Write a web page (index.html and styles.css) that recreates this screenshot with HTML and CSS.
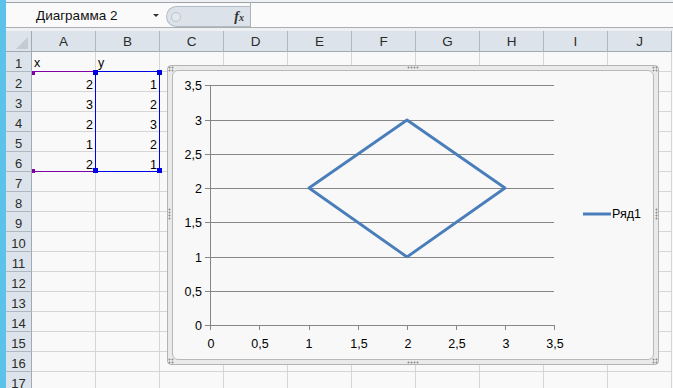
FILE: index.html
```html
<!DOCTYPE html>
<html lang="ru">

<head>
    <meta charset="UTF-8">
    <title>Диаграмма 2</title>
    <link rel="stylesheet" href="styles.css">
</head>

<body>
    <div class="app">
        <div class="ribbon-edge"></div>
        <div class="fxbar">
            <div class="namebox"><span>Диаграмма 2</span><span class="arrow"></span></div>
            <div class="fxpill"><span class="grip"></span><span class="fx">f<i>x</i></span></div>
            <div class="fxinput"></div>
        </div>
        <div class="gap"></div>

        <div class="sheet">
            <div class="row colhead">
                <div class="corner"></div>
                <div class="ch">A</div><div class="ch">B</div><div class="ch">C</div><div class="ch">D</div><div class="ch">E</div>
                <div class="ch">F</div><div class="ch">G</div><div class="ch">H</div><div class="ch">I</div><div class="ch">J</div>
            </div>
            <div class="row">
                <div class="rh">1</div>
                <div class="c txt">x</div><div class="c txt">y</div><div class="c"></div><div class="c"></div><div class="c"></div>
                <div class="c"></div><div class="c"></div><div class="c"></div><div class="c"></div><div class="c"></div>
            </div>
            <div class="row">
                <div class="rh">2</div>
                <div class="c num">2</div><div class="c num">1</div><div class="c"></div><div class="c"></div><div class="c"></div>
                <div class="c"></div><div class="c"></div><div class="c"></div><div class="c"></div><div class="c"></div>
            </div>
            <div class="row">
                <div class="rh">3</div>
                <div class="c num">3</div><div class="c num">2</div><div class="c"></div><div class="c"></div><div class="c"></div>
                <div class="c"></div><div class="c"></div><div class="c"></div><div class="c"></div><div class="c"></div>
            </div>
            <div class="row">
                <div class="rh">4</div>
                <div class="c num">2</div><div class="c num">3</div><div class="c"></div><div class="c"></div><div class="c"></div>
                <div class="c"></div><div class="c"></div><div class="c"></div><div class="c"></div><div class="c"></div>
            </div>
            <div class="row">
                <div class="rh">5</div>
                <div class="c num">1</div><div class="c num">2</div><div class="c"></div><div class="c"></div><div class="c"></div>
                <div class="c"></div><div class="c"></div><div class="c"></div><div class="c"></div><div class="c"></div>
            </div>
            <div class="row">
                <div class="rh">6</div>
                <div class="c num">2</div><div class="c num">1</div><div class="c"></div><div class="c"></div><div class="c"></div>
                <div class="c"></div><div class="c"></div><div class="c"></div><div class="c"></div><div class="c"></div>
            </div>
            <div class="row">
                <div class="rh">7</div>
                <div class="c"></div><div class="c"></div><div class="c"></div><div class="c"></div><div class="c"></div>
                <div class="c"></div><div class="c"></div><div class="c"></div><div class="c"></div><div class="c"></div>
            </div>
            <div class="row">
                <div class="rh">8</div>
                <div class="c"></div><div class="c"></div><div class="c"></div><div class="c"></div><div class="c"></div>
                <div class="c"></div><div class="c"></div><div class="c"></div><div class="c"></div><div class="c"></div>
            </div>
            <div class="row">
                <div class="rh">9</div>
                <div class="c"></div><div class="c"></div><div class="c"></div><div class="c"></div><div class="c"></div>
                <div class="c"></div><div class="c"></div><div class="c"></div><div class="c"></div><div class="c"></div>
            </div>
            <div class="row">
                <div class="rh">10</div>
                <div class="c"></div><div class="c"></div><div class="c"></div><div class="c"></div><div class="c"></div>
                <div class="c"></div><div class="c"></div><div class="c"></div><div class="c"></div><div class="c"></div>
            </div>
            <div class="row">
                <div class="rh">11</div>
                <div class="c"></div><div class="c"></div><div class="c"></div><div class="c"></div><div class="c"></div>
                <div class="c"></div><div class="c"></div><div class="c"></div><div class="c"></div><div class="c"></div>
            </div>
            <div class="row">
                <div class="rh">12</div>
                <div class="c"></div><div class="c"></div><div class="c"></div><div class="c"></div><div class="c"></div>
                <div class="c"></div><div class="c"></div><div class="c"></div><div class="c"></div><div class="c"></div>
            </div>
            <div class="row">
                <div class="rh">13</div>
                <div class="c"></div><div class="c"></div><div class="c"></div><div class="c"></div><div class="c"></div>
                <div class="c"></div><div class="c"></div><div class="c"></div><div class="c"></div><div class="c"></div>
            </div>
            <div class="row">
                <div class="rh">14</div>
                <div class="c"></div><div class="c"></div><div class="c"></div><div class="c"></div><div class="c"></div>
                <div class="c"></div><div class="c"></div><div class="c"></div><div class="c"></div><div class="c"></div>
            </div>
            <div class="row">
                <div class="rh">15</div>
                <div class="c"></div><div class="c"></div><div class="c"></div><div class="c"></div><div class="c"></div>
                <div class="c"></div><div class="c"></div><div class="c"></div><div class="c"></div><div class="c"></div>
            </div>
            <div class="row">
                <div class="rh">16</div>
                <div class="c"></div><div class="c"></div><div class="c"></div><div class="c"></div><div class="c"></div>
                <div class="c"></div><div class="c"></div><div class="c"></div><div class="c"></div><div class="c"></div>
            </div>
            <div class="row">
                <div class="rh">17</div>
                <div class="c"></div><div class="c"></div><div class="c"></div><div class="c"></div><div class="c"></div>
                <div class="c"></div><div class="c"></div><div class="c"></div><div class="c"></div><div class="c"></div>
            </div>

            <!-- выделенные диапазоны данных -->
            <div class="sel-x"><span class="pq top"></span><span class="pq bot"></span></div>
            <div class="sel-y">
                <span class="sq tl"></span><span class="sq tr"></span>
                <span class="sq bl"></span><span class="sq br"></span>
            </div>

            <div class="chart">
                <span class="hdl corner-tl"></span><span class="hdl corner-tr"></span>
                <span class="hdl corner-bl"></span><span class="hdl corner-br"></span>
                <span class="hdl mid-top"></span><span class="hdl mid-bot"></span>
                <span class="hdl mid-left"></span><span class="hdl mid-right"></span>
                <div class="plotbox">
                    <svg width="480" height="288" viewBox="173 71 480 288">
                        <g stroke="#868686" stroke-width="1">
                            <line x1="210" y1="85.5" x2="554" y2="85.5" />
                            <line x1="210" y1="120.5" x2="554" y2="120.5" />
                            <line x1="210" y1="154.5" x2="554" y2="154.5" />
                            <line x1="210" y1="188.5" x2="554" y2="188.5" />
                            <line x1="210" y1="222.5" x2="554" y2="222.5" />
                            <line x1="210" y1="257.5" x2="554" y2="257.5" />
                            <line x1="210" y1="291.5" x2="554" y2="291.5" />
                            <line x1="205" y1="325.5" x2="555" y2="325.5" />
                            <line x1="210.5" y1="85" x2="210.5" y2="330" />
                            <line x1="205" y1="85.5" x2="210" y2="85.5" />
                            <line x1="205" y1="120.5" x2="210" y2="120.5" />
                            <line x1="205" y1="154.5" x2="210" y2="154.5" />
                            <line x1="205" y1="188.5" x2="210" y2="188.5" />
                            <line x1="205" y1="222.5" x2="210" y2="222.5" />
                            <line x1="205" y1="257.5" x2="210" y2="257.5" />
                            <line x1="205" y1="291.5" x2="210" y2="291.5" />
                            <line x1="259.5" y1="325" x2="259.5" y2="330" />
                            <line x1="309.5" y1="325" x2="309.5" y2="330" />
                            <line x1="358.5" y1="325" x2="358.5" y2="330" />
                            <line x1="407.5" y1="325" x2="407.5" y2="330" />
                            <line x1="456.5" y1="325" x2="456.5" y2="330" />
                            <line x1="505.5" y1="325" x2="505.5" y2="330" />
                            <line x1="554.5" y1="325" x2="554.5" y2="330" />
                        </g>
                        <g class="lbl" text-anchor="end">
                            <text x="202" y="90">3,5</text>
                            <text x="202" y="125">3</text>
                            <text x="202" y="159">2,5</text>
                            <text x="202" y="193">2</text>
                            <text x="202" y="227">1,5</text>
                            <text x="202" y="262">1</text>
                            <text x="202" y="296">0,5</text>
                            <text x="202" y="330">0</text>
                        </g>
                        <g class="lbl" text-anchor="middle">
                            <text x="211" y="348">0</text>
                            <text x="260" y="348">0,5</text>
                            <text x="309" y="348">1</text>
                            <text x="359" y="348">1,5</text>
                            <text x="408" y="348">2</text>
                            <text x="457" y="348">2,5</text>
                            <text x="506" y="348">3</text>
                            <text x="555" y="348">3,5</text>
                        </g>
                        <polyline points="407,257 505,188 407,120 309,188 407,257" fill="none" stroke="#4a7ebb" stroke-width="2.8" stroke-linejoin="round" />
                        <line x1="583" y1="214" x2="611" y2="214" stroke="#4a7ebb" stroke-width="2.8" />
                        <text class="lbl" x="612" y="218">Ряд1</text>
                    </svg>
                </div>
            </div>
        </div>
    </div>
</body>

</html>
```

FILE: styles.css
```css
* {
    margin: 0;
    padding: 0;
    box-sizing: border-box;
}

body {
    background: #f9f9f9;
    font-family: "Liberation Sans", Arial, sans-serif;
    color: #000;
    overflow: hidden;
}

.app {
    position: relative;
    width: 673px;
    height: 388px;
    border-left: 6px solid #5dc2ea;
    overflow: hidden;
}

/* полоса ленты и строка формул */
.ribbon-edge {
    height: 3px;
    background: #eef0f3;
    border-bottom: 1px solid #9ea4aa;
}

.fxbar {
    display: flex;
    height: 25px;
    background: #fafafa;
    border-bottom: 1px solid #a9aeb3;
}

.namebox {
    width: 160px;
    display: flex;
    align-items: center;
    padding-left: 30px;
    font-size: 13.5px;
    color: #111;
}

.namebox .arrow {
    margin-left: auto;
    margin-right: 7px;
    border-left: 3px solid transparent;
    border-right: 3px solid transparent;
    border-top: 3px solid #333;
}

.fxpill {
    width: 84px;
    height: 21px;
    margin-top: 3px;
    display: flex;
    align-items: center;
    background: #dbe2ea;
    border: 1px solid #b3bbc4;
    border-right: none;
    border-radius: 11px 0 0 11px;
    padding: 0 6px 0 4px;
}

.grip {
    width: 10px;
    height: 10px;
    border-radius: 50%;
    background: #e3e8ed;
    border: 1px solid #bcc3cb;
}

.fx {
    margin-left: auto;
    font-family: "Liberation Serif", serif;
    font-style: italic;
    font-weight: bold;
    font-size: 14px;
    color: #333;
}

.fx i {
    font-size: 10px;
}

.fxinput {
    flex: 1;
    background: #fbfbfb;
    border-left: 1px solid #aab2ba;
}

.gap {
    height: 3px;
    background: #eef0f2;
}

/* сетка листа */
.sheet {
    position: relative;
}

.row {
    display: flex;
    height: 20px;
}

.colhead {
    height: 21px;
}

.corner,
.rh,
.ch {
    flex: none;
    background: #dce3ea;
    color: #2b2b2b;
    text-align: center;
}

.corner {
    position: relative;
    width: 26px;
    border-right: 1px solid #9eaab6;
    border-bottom: 1px solid #9eaab6;
}

.corner::after {
    content: "";
    position: absolute;
    right: 3px;
    bottom: 2px;
    border-left: 12px solid transparent;
    border-bottom: 12px solid #c3cbd3;
}

.ch {
    width: 64px;
    border-right: 1px solid #aeb8c2;
    border-bottom: 1px solid #9eaab6;
    font-size: 13.5px;
    line-height: 13px;
    padding-top: 4px;
}

.rh {
    width: 26px;
    border-right: 1px solid #9eaab6;
    border-bottom: 1px solid #aeb8c2;
    font-size: 13px;
    line-height: 12px;
    padding-top: 6px;
}

.c {
    flex: none;
    width: 64px;
    border-right: 1px solid #d6d6d6;
    border-bottom: 1px solid #d6d6d6;
    font-size: 12.5px;
    line-height: 12px;
    padding: 7px 2px 0;
}

.c.txt {
    padding-top: 5px;
}

.num {
    text-align: right;
}

/* рамки выделения */
.sel-x {
    position: absolute;
    left: 26px;
    top: 40px;
    width: 63px;
    height: 101px;
    border-top: 1px solid #8000a8;
    border-bottom: 1px solid #8000a8;
}

.pq {
    position: absolute;
    left: 0;
    width: 3px;
    height: 4px;
    background: #8000a8;
}

.pq.top {
    top: -1px;
}

.pq.bot {
    bottom: -2px;
}

.sel-y {
    position: absolute;
    left: 89px;
    top: 40px;
    width: 65px;
    height: 101px;
    border: 1px solid #0000e6;
}

.sq {
    position: absolute;
    width: 5px;
    height: 5px;
    background: #0000e6;
}

.sq.tl { left: -3px; top: -2px; }
.sq.tr { right: -3px; top: -2px; }
.sq.bl { left: -3px; bottom: -2px; }
.sq.br { right: -3px; bottom: -2px; }

/* диаграмма */
.chart {
    position: absolute;
    left: 161px;
    top: 34px;
    width: 492px;
    height: 300px;
    padding: 4px;
    background: #eaeaea;
    border: 1px solid #b4b4b4;
    border-radius: 4px;
}

.plotbox {
    height: 100%;
    background: #f8f8f8;
    border: 1px solid #b9b9b9;
    border-radius: 6px;
    overflow: hidden;
}

.plotbox svg {
    display: block;
}

.lbl {
    font-family: "Liberation Sans", Arial, sans-serif;
    font-size: 12.5px;
    fill: #000;
}

.hdl {
    position: absolute;
    background-image: radial-gradient(circle, #8f8f8f 0.8px, transparent 1.2px);
    background-size: 3px 3px;
}

.corner-tl { left: 0; top: 0; width: 6px; height: 6px; }
.corner-tr { right: 0; top: 0; width: 6px; height: 6px; }
.corner-bl { left: 0; bottom: 0; width: 6px; height: 6px; }
.corner-br { right: 0; bottom: 0; width: 6px; height: 6px; }
.mid-top { left: 239px; top: 0; width: 12px; height: 3px; }
.mid-bot { left: 239px; bottom: 0; width: 12px; height: 3px; }
.mid-left { left: 0; top: 142px; width: 3px; height: 12px; }
.mid-right { right: 0; top: 142px; width: 3px; height: 12px; }
```
